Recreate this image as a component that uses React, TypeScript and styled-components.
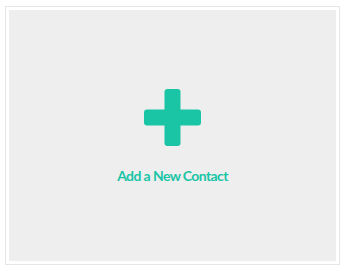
import React from 'react';
import styled, {createGlobalStyle} from 'styled-components';

const GlobalStyle = createGlobalStyle`
    html, body { margin: 0; padding: 0; background: #ffffff; }
    body { font-family: Lato, "Open Sans", sans-serif; }
`;

const Page = styled.div`
    padding: 6px 6px 6px 5px;
`;

const Card = styled.div`
    width: 335px;
    height: 259px;
    box-sizing: border-box;
    border: 1px solid #e6e6e6;
    padding: 3px;
    background: #ffffff;
`;

const AddTile = styled.button`
    width: 100%;
    height: 100%;
    border: none;
    background: #eeeeee;
    display: flex;
    flex-direction: column;
    align-items: center;
    justify-content: center;
    gap: 21px;
    cursor: pointer;
    padding: 2px 0 0;
`;

const Label = styled.span`
    font-family: Lato, "Open Sans", sans-serif;
    font-weight: 700;
    font-size: 14px;
    line-height: 17px;
    letter-spacing: -0.6px;
    color: #1ac5a6;
`;

const PlusIcon = () => (
    <svg width="57" height="57" viewBox="0 0 57 57" aria-hidden>
        <rect x="20.5" y="0" width="16" height="57" rx="3" fill="#1ac5a6"/>
        <rect x="0" y="20.5" width="57" height="16" rx="3" fill="#1ac5a6"/>
    </svg>
);

export default function App() {
    return (
        <>
            <GlobalStyle/>
            <Page>
                <Card>
                    <AddTile>
                        <PlusIcon/>
                        <Label>Add a New Contact</Label>
                    </AddTile>
                </Card>
            </Page>
        </>
    );
}
